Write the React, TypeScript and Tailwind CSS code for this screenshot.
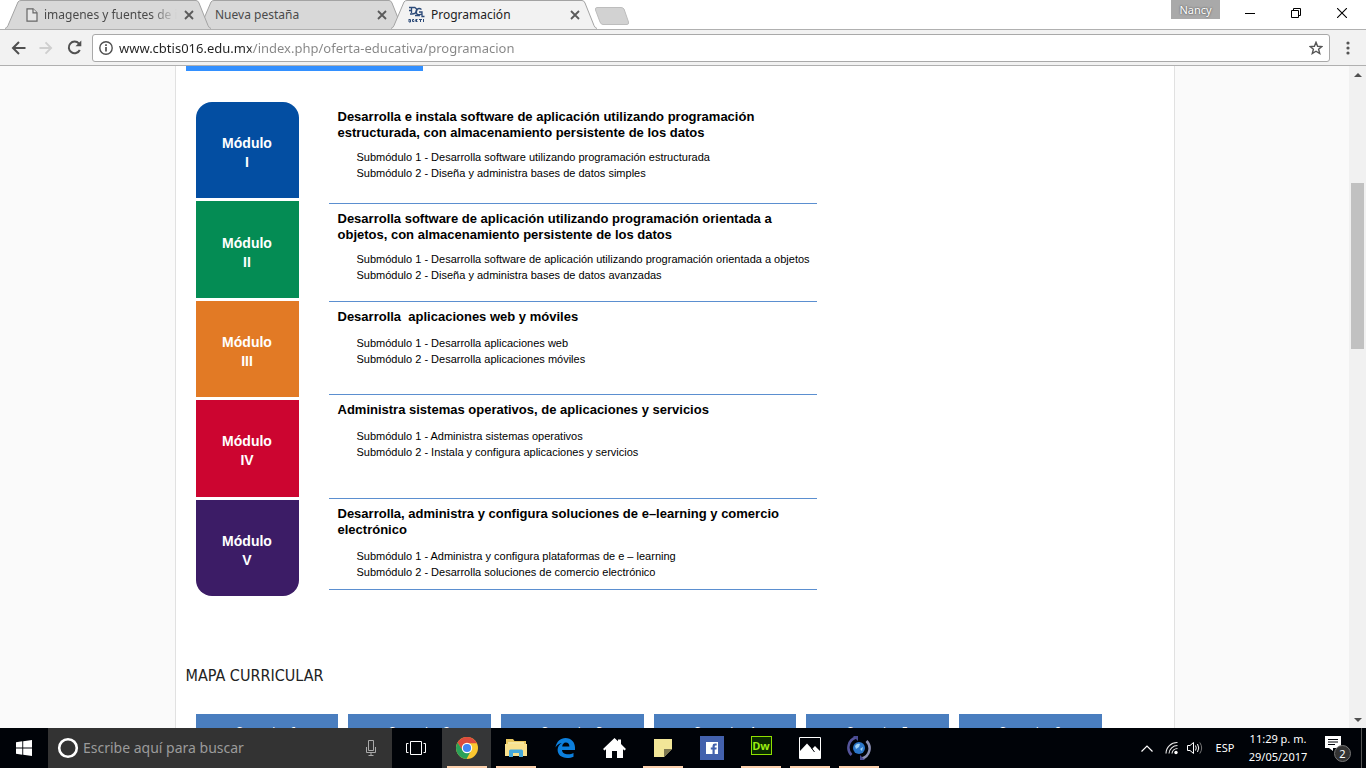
import type { ReactNode } from "react";

type Module = {
  numeral: string;
  color: string;
  row: string;
  title: string;
  subs: string[];
};

const modules: Module[] = [
  {
    numeral: "I",
    color: "bg-[#034ea2]",
    row: "min-h-[102px] gap-2",
    title:
      "Desarrolla e instala software de aplicación utilizando programación estructurada, con almacenamiento persistente de los datos",
    subs: [
      "Submódulo 1 - Desarrolla software utilizando programación estructurada",
      "Submódulo 2 - Diseña y administra bases de datos simples",
    ],
  },
  {
    numeral: "II",
    color: "bg-[#048c54]",
    row: "min-h-[98px] gap-2",
    title:
      "Desarrolla software de aplicación utilizando programación orientada a objetos, con almacenamiento persistente de los datos",
    subs: [
      "Submódulo 1 - Desarrolla software de aplicación utilizando programación orientada a objetos",
      "Submódulo 2 - Diseña y administra bases de datos avanzadas",
    ],
  },
  {
    numeral: "III",
    color: "bg-[#e27a25]",
    row: "min-h-[93px] gap-2.5",
    title: "Desarrolla  aplicaciones web y móviles",
    subs: ["Submódulo 1 - Desarrolla aplicaciones web", "Submódulo 2 - Desarrolla aplicaciones móviles"],
  },
  {
    numeral: "IV",
    color: "bg-[#cc0530]",
    row: "min-h-[104px] gap-2.5",
    title: "Administra sistemas operativos, de aplicaciones y servicios",
    subs: ["Submódulo 1 - Administra sistemas operativos", "Submódulo 2 - Instala y configura aplicaciones y servicios"],
  },
  {
    numeral: "V",
    color: "bg-[#3c1c66]",
    row: "min-h-[91px] gap-2.5",
    title: "Desarrolla, administra y configura soluciones de e–learning y comercio electrónico",
    subs: [
      "Submódulo 1 - Administra y configura plataformas de e – learning",
      "Submódulo 2 - Desarrolla soluciones de comercio electrónico",
    ],
  },
];

function TabShape({ fill }: { fill: string }) {
  return (
    <svg className="absolute inset-0 -z-10 h-full w-full" viewBox="0 0 206 29" preserveAspectRatio="none" aria-hidden="true">
      <path d="M0 28.5 Q2 28 3 25.500 L13 2 Q14 .5 16 .5 H191 Q193 .5 194 3 L203 25.500 Q204 28 206 28.500 V29 H0Z" fill={fill} />
      <path d="M0 28.500 Q2 28 3 25.500 L13 2 Q14 .5 16 .5 H191 Q193 .5 194 3 L203 25.500 Q204 28 206 28.500" fill="none" stroke="#a3a3a3" />
    </svg>
  );
}

function Tab({ title, icon, active, layer, faded }: { title: string; icon?: ReactNode; active?: boolean; layer: string; faded?: boolean }) {
  return (
    <div className={`relative isolate -ml-[13px] flex h-[29px] w-[206px] shrink-0 items-center gap-1.5 pr-[16px] pl-[17px] ${layer}`}>
      <TabShape fill={active ? "#f2f2f2" : "#d8d8d8"} />
      {icon}
      <button
        type="button"
        className={`min-w-0 flex-1 overflow-hidden text-left text-[12px] leading-4 whitespace-nowrap ${active ? "text-[#222]" : "text-[#4a4a4a]"} ${faded ? "[mask-image:linear-gradient(90deg,#000_80%,transparent_100%)]" : ""}`}
      >
        {title}
      </button>
      <button type="button" aria-label="Cerrar pestaña" className="flex size-3 shrink-0 items-center justify-center">
        <svg width="10" height="10" viewBox="0 0 10 10" stroke="#5a5a5a" strokeWidth="1.8">
          <path d="M1 1 9 9M9 1 1 9" />
        </svg>
      </button>
    </div>
  );
}

function FileIcon() {
  return (
    <svg className="ml-1 shrink-0" width="12" height="14" viewBox="0 0 12 14" fill="#e6e6e6" stroke="#666" strokeWidth="1.2">
      <path d="M1 .8H7L11 4.800V13.200H1Z" />
      <path d="M7 .8V4.800H11" />
    </svg>
  );
}

function DgetiIcon() {
  return (
    <svg className="shrink-0" width="17" height="17" viewBox="0 0 17 17" fill="none" stroke="#2c4a78">
      <path d="M1 1.500H7Q9.500 3 8.500 5.500T4 8H2M3.500 2V7M1 4.500H3" strokeWidth="1.300" />
      <path d="M13.500 3.500Q11 1.500 9 3.500T9 8Q11 9.500 13.500 8M11 6H14V10.500H16.500M7 9.500H12" strokeWidth="1.300" />
      <path d="M1 13V16H2.500V13.500H1M6 13.500H4.500V15.500H6V14.500M9.500 13.500H7.800V15.500H9.500M7.800 14.500H9M11 13.500H14M12.500 13.500V16M15.500 13V16" strokeWidth="1" />
    </svg>
  );
}

function Chrome() {
  return (
    <header className="shrink-0 font-['Noto_Sans',sans-serif]">
      <div className="flex h-[29px] items-start justify-between bg-white">
        <nav aria-label="Pestañas" className="flex h-[29px] items-start pl-[18px]">
          <Tab title="imagenes y fuentes de in" icon={<FileIcon />} layer="z-20" faded />
          <Tab title="Nueva pestaña" layer="z-10" />
          <Tab title="Programación" icon={<DgetiIcon />} active layer="z-30" />
          <button type="button" aria-label="Nueva pestaña" className="mt-[7px] -ml-[3px]">
            <svg width="36" height="18" viewBox="0 0 36 18">
              <path d="M3 .5H27Q29 .5 30 2L34.500 15Q35 17.500 33 17.500H9Q7 17.500 6 15L1.500 3Q1 .5 3 .5Z" fill="#d2d2d2" stroke="#bdbdbd" />
            </svg>
          </button>
        </nav>
        <div className="flex items-start">
          <button type="button" className="h-[19px] w-[49px] bg-[#a9a9a9] text-[11px] leading-[18px] text-white [text-shadow:0_0_2px_#333]">
            Nancy
          </button>
          <div className="flex h-[26px] pl-[7px]">
            <button type="button" aria-label="Minimizar" className="flex w-[46px] items-center justify-center">
              <svg width="10" height="10" viewBox="0 0 10 10" stroke="#000"><path d="M0 5.500H10" /></svg>
            </button>
            <button type="button" aria-label="Restaurar" className="flex w-[45px] items-center justify-center">
              <svg width="10" height="10" viewBox="0 0 10 10" stroke="#000" fill="none"><path d="M.5 2.500H7.500V9.500H.5ZM2.500 2.500V.5H9.500V7.500H7.500" /></svg>
            </button>
            <button type="button" aria-label="Cerrar" className="flex w-[48px] items-center justify-center">
              <svg width="10" height="10" viewBox="0 0 10 10" stroke="#000" strokeWidth="1.100"><path d="M0 0 10 10M10 0 0 10" /></svg>
            </button>
          </div>
        </div>
      </div>
      <div className="flex h-[37px] items-center border-y border-[#b0b0b0] bg-[#f2f2f2] pl-[10px]">
        <button type="button" aria-label="Atrás" className="flex w-4 justify-center">
          <svg width="15" height="14" viewBox="0 0 15 14" fill="none" stroke="#505050" strokeWidth="2"><path d="M14.500 7H2M8 1 2 7 8 13" /></svg>
        </button>
        <button type="button" aria-label="Adelante" className="ml-3 flex w-4 justify-center">
          <svg width="14" height="14" viewBox="0 0 15 14" fill="none" stroke="#cfcfcf" strokeWidth="2"><path d="M.5 7H13M7 1 13 7 7 13" /></svg>
        </button>
        <button type="button" aria-label="Volver a cargar" className="ml-3 flex w-4 justify-center">
          <svg width="15" height="15" viewBox="0 0 15 15" fill="none" stroke="#505050" strokeWidth="2"><path d="M12.800 10A5.800 5.800 0 1 1 12 3.600" /><path d="M14.300 .5V6.300H8.500Z" fill="#505050" stroke="none" /></svg>
        </button>
        <label className="ml-[10px] flex h-7 min-w-0 flex-1 items-center rounded-[3px] border border-[#a9a9a9] bg-white pr-1.5 pl-1.5">
          <svg className="shrink-0" width="14" height="14" viewBox="0 0 14 14" fill="none" stroke="#4f4f4f" strokeWidth="1.400"><circle cx="7" cy="7" r="6.200" /><path d="M7 6V10.500M7 3.300V4.900" strokeWidth="1.700" /></svg>
          <input
            type="text"
            aria-label="Dirección"
            defaultValue="www.cbtis016.edu.mx/index.php/oferta-educativa/programacion"
            className="ml-1.5 min-w-0 flex-1 bg-[linear-gradient(90deg,#222_132px,#858585_132px)] bg-clip-text text-[13px] leading-5 text-transparent outline-none"
          />
          <button type="button" aria-label="Marcador" className="shrink-0">
            <svg width="14" height="14" viewBox="0 0 14 14" fill="none" stroke="#555" strokeWidth="1.400"><path d="M7 1.300 8.600 5.300 12.900 5.600 9.600 8.300 10.700 12.500 7 10.200 3.300 12.500 4.400 8.300 1.100 5.600 5.400 5.300Z" /></svg>
          </button>
        </label>
        <button type="button" aria-label="Menú" className="flex w-[36px] justify-center">
          <svg width="4" height="14" viewBox="0 0 4 14" fill="#555"><circle cx="2" cy="2" r="1.600" /><circle cx="2" cy="7" r="1.600" /><circle cx="2" cy="12" r="1.600" /></svg>
        </button>
      </div>
    </header>
  );
}

function Scrollbar() {
  return (
    <div className="flex w-[17px] shrink-0 flex-col items-center bg-[#f1f1f1]">
      <button type="button" aria-label="Subir" className="flex h-[17px] w-full items-center justify-center">
        <svg width="8" height="4" viewBox="0 0 8 4" fill="#505050"><path d="M4 0 8 4H0Z" /></svg>
      </button>
      <div className="flex w-full flex-1 flex-col items-center">
        <div className="flex-[100]" />
        <div className="w-[13px] flex-[166] bg-[#c1c1c1]" />
        <div className="flex-[362]" />
      </div>
      <button type="button" aria-label="Bajar" className="flex h-[17px] w-full items-center justify-center">
        <svg width="8" height="4" viewBox="0 0 8 4" fill="#505050"><path d="M0 0H8L4 4Z" /></svg>
      </button>
    </div>
  );
}

function Page() {
  return (
    <main className="min-w-0 flex-1 overflow-hidden bg-[#fafafa]">
      <article className="mx-auto w-full max-w-[1000px] border-x border-[#e1e1e1] bg-white pr-[72px] pl-[10px]">
        <div className="flex h-[5px] items-end overflow-hidden font-['DejaVu_Sans_Condensed','DejaVu_Sans',sans-serif] text-[16px]">
          <h2 className="shrink-0 bg-[#3390ff] leading-5 text-white">COMPETENCIAS PROFESIONALES</h2>
        </div>
        <section className="mt-[31px] ml-[10px] flex gap-[30px] font-['Liberation_Sans',Arial,sans-serif]">
          <div className="flex h-[494px] w-[103px] shrink-0 flex-col gap-[3px] overflow-hidden rounded-[16px]">
            {modules.map((m) => (
              <div
                key={m.numeral}
                className={`flex flex-1 flex-col items-center justify-center pt-1.5 font-['Liberation_Sans_Narrow','Liberation_Sans',sans-serif] text-[14px] leading-[19px] font-bold text-white ${m.color}`}
              >
                <span>Módulo</span>
                <span>{m.numeral}</span>
              </div>
            ))}
          </div>
          <div className="w-[488px]">
            {modules.map((m) => (
              <div key={m.numeral} className={`flex flex-col border-b border-[#5b8fd0] pt-[7px] pl-[9px] text-black ${m.row}`}>
                <h3 className="font-['Liberation_Sans_Narrow','Liberation_Sans',sans-serif] text-[13px] leading-4 font-bold whitespace-pre-wrap">{m.title}</h3>
                <ul className="pl-[19px] text-[11px] leading-4 whitespace-nowrap">
                  {m.subs.map((s) => (
                    <li key={s}>{s}</li>
                  ))}
                </ul>
              </div>
            ))}
          </div>
        </section>
        <h2 className="mt-[70px] font-['DejaVu_Sans_Condensed','DejaVu_Sans',sans-serif] text-[16px] leading-5 text-[#222]">MAPA CURRICULAR</h2>
        <div className="mt-7 ml-[10px] grid grid-cols-6 gap-[10px] font-['DejaVu_Sans_Condensed',sans-serif] text-[12px] text-white">
          {[1, 2, 3, 4, 5, 6].map((n) => (
            <button key={n} type="button" className="h-[36px] bg-[#4a7ebf] text-center">
              Semestre {n}
            </button>
          ))}
        </div>
      </article>
    </main>
  );
}

function AppButton({ label, open, active, children }: { label: string; open?: boolean; active?: boolean; children: ReactNode }) {
  return (
    <button
      type="button"
      aria-label={label}
      className={`flex h-full w-[49px] flex-col items-center pr-1 pl-[5px] ${active ? "bg-[#353637] pr-0 pl-0" : ""}`}
    >
      <span className="flex w-full flex-1 items-center justify-center pt-0.5">{children}</span>
      <span className={`h-0.5 w-full ${open || active ? "bg-[#fcd0ac]" : ""}`} />
    </button>
  );
}

function Taskbar() {
  return (
    <footer className="flex h-10 shrink-0 items-stretch bg-[#000308] font-['Noto_Sans',sans-serif] text-white">
      <button type="button" aria-label="Inicio" className="flex w-12 items-center justify-center">
        <svg width="16" height="16" viewBox="0 0 16 16" fill="#fff"><path d="M0 2.200 6.300 1.300V7.500H0ZM7.200 1.200 16 0V7.500H7.200ZM0 8.400H6.300V14.700L0 13.800ZM7.200 8.400H16V16L7.200 14.800Z" /></svg>
      </button>
      <label className="flex w-[344px] items-center bg-[#333] pr-3 pl-[9px]">
        <svg className="shrink-0" width="22" height="22" viewBox="0 0 22 22" fill="none"><circle cx="11" cy="11" r="8.800" stroke="#fff" strokeWidth="2.600" /></svg>
        <input type="text" aria-label="Buscar" placeholder="Escribe aquí para buscar" className="ml-1 min-w-0 flex-1 text-[14px] leading-5 outline-none placeholder:text-[#9b9b9b]" />
        <svg className="shrink-0" width="18" height="18" viewBox="0 0 18 18" fill="none" stroke="#aaa"><path d="M6.500 1.500H11.500V11.500H6.500ZM4.500 8V13.500H13.500V8M9 13.500V16.500M6.500 16.500H11.500" /></svg>
      </label>
      <button type="button" aria-label="Vista de tareas" className="mr-[2px] flex w-12 items-center justify-center">
        <svg width="20" height="14" viewBox="0 0 20 14" fill="none" stroke="#fff"><path d="M4.500 .5H15.500V13.500H4.500ZM2.500 2.500H.5V11.500H2.500M17.500 2.500H19.500V11.500H17.500" /></svg>
      </button>
      <AppButton label="Google Chrome" active>
        <svg width="22" height="22" viewBox="0 0 22 22">
          <circle cx="11" cy="11" r="11" fill="#fbc730" />
          <path d="M1.500 5.500A11 11 0 0 1 20.500 5.500L21 6.200H11A5 5 0 0 0 6.300 9.500L6 13Z" fill="#dd4b3e" />
          <path d="M1.500 5.500A11 11 0 0 0 10.500 22L15 13.800A5 5 0 0 1 6.700 13.500Z" fill="#2aa159" />
          <circle cx="11" cy="11" r="5.200" fill="#fff" />
          <circle cx="11" cy="11" r="4.100" fill="#4285f4" />
        </svg>
      </AppButton>
      <AppButton label="Explorador de archivos" open>
        <svg width="22" height="20" viewBox="0 0 22 20">
          <path d="M1 1H8L9.500 3H21V18H1Z" fill="#e9c75e" />
          <path d="M3 4H19V8H3Z" fill="#f5e6a0" />
          <path d="M0 6H22V18H0Z" fill="#f9e18d" />
          <path d="M4 19V13Q4 11.500 5.500 11.500H16.500Q18 11.500 18 13V19H14V15H8V19Z" fill="#45a9db" />
        </svg>
      </AppButton>
      <AppButton label="Microsoft Edge">
        <svg width="20" height="20" viewBox="0 0 20 20" fill="#0c7fdc">
          <path d="M.5 9.500C1.500 3.500 5.500 0 10.500 0C16.500 0 20 4.500 20 9.500V12H7C7.200 15 10 16.300 13 16.300C15.300 16.300 17.200 15.600 18.500 14.900V18.800C16.800 19.600 14.600 20 12.200 20C6.200 20 2.600 16.600 2.600 11.800C2.600 8.800 4.300 6.400 6.800 5C4.200 5.400 1.900 7 .5 9.500ZM7.200 8.500H14.400C14.400 6 13 4.600 10.900 4.600C8.700 4.600 7.500 6.300 7.200 8.500Z" fillRule="evenodd" />
        </svg>
      </AppButton>
      <AppButton label="Casa">
        <svg width="23" height="20" viewBox="0 0 23 20" fill="#fff"><path d="M11.500 0 15 3.300V1.500H18V6L23 11L21.500 12.500 20 11.300V20H14V13H9V20H3V11.300L1.500 12.500 0 11Z" /></svg>
      </AppButton>
      <AppButton label="Notas" open>
        <svg width="18" height="18" viewBox="0 0 18 18"><path d="M0 0H18V10L10 18H0Z" fill="#f2e698" /><path d="M10 18V10H18Z" fill="#7d7750" /></svg>
      </AppButton>
      <AppButton label="Facebook">
        <svg width="24" height="24" viewBox="0 0 24 24">
          <path d="M0 0H24V24H0Z" fill="#4361ad" />
          <path d="M6 6H18V18H6Z" fill="#fff" />
          <path d="M12.500 18V13.500H10.800V11.500H12.500V10Q12.500 7.600 15 7.600H16.700V9.600H15.500Q14.700 9.600 14.700 10.500V11.500H16.700L16.400 13.500H14.700V18Z" fill="#4361ad" />
        </svg>
      </AppButton>
      <AppButton label="Dreamweaver" open>
        <span className="mb-1.5 flex h-[19px] w-[21px] items-center justify-center border border-[#8fe000] bg-[#0a2a00] font-['Open_Sans',sans-serif] text-[11px] leading-none font-bold text-[#9bef10]">
          Dw
        </span>
      </AppButton>
      <AppButton label="Fotos" open>
        <svg width="22" height="22" viewBox="0 0 22 22"><path d="M.5 .5H21.500V21.500H.5Z" fill="#000308" stroke="#fff" /><path d="M1 14 8 6.500 13 12 16 9 21 14V21H1Z" fill="#fff" /><path d="M12.500 11 15.500 15" stroke="#000308" /></svg>
      </AppButton>
      <AppButton label="Sincronización" open>
        <svg width="24" height="24" viewBox="0 0 24 24" fill="none">
          <path d="M9 1.500A10.500 10.500 0 0 0 4.500 19" stroke="#55559c" strokeWidth="2.500" />
          <path d="M15 22.500A10.500 10.500 0 0 0 19.500 5" stroke="#8b90b4" strokeWidth="2.500" />
          <path d="M6 0H11V5ZM18 24H13V19Z" fill="#494b92" />
          <circle cx="12" cy="12" r="6" fill="#2c77c9" />
          <path d="M8 10Q10 7 13 8L12 11 9 13ZM13 13 16 11 15 15Z" fill="#9fd2f5" />
        </svg>
      </AppButton>
      <div className="ml-auto flex items-center">
        <button type="button" aria-label="Iconos ocultos" className="flex w-3">
          <svg width="12" height="7" viewBox="0 0 12 7" fill="none" stroke="#fff" strokeWidth="1.200"><path d="M.5 6.500 6 1 11.500 6.500" /></svg>
        </button>
        <button type="button" aria-label="Red" className="ml-3 flex w-4">
          <svg width="14" height="14" viewBox="0 0 14 14" fill="none" stroke="#e8e8e8" strokeWidth="1.100">
            <path d="M1 12.500A11 11 0 0 1 12.500 1.500M4 12.500A8.500 8.500 0 0 1 12.500 4.500M7 12.500A5.500 5.500 0 0 1 12.500 7.500" />
            <circle cx="11" cy="11.500" r="1.700" fill="#fff" stroke="none" />
          </svg>
        </button>
        <button type="button" aria-label="Volumen" className="ml-1.5 flex w-4">
          <svg width="16" height="14" viewBox="0 0 16 14" fill="none" stroke="#fff"><path d="M.5 4.500H3L6.500 1.500V12.500L3 9.500H.5ZM8.500 4.500Q10 7 8.500 9.500M10.500 3Q13 7 10.500 11" /><path d="M12.800 1.500Q16.500 7 12.800 12.500" stroke="#777" /></svg>
        </button>
        <button type="button" className="ml-3 w-5 text-[11px] leading-4">ESP</button>
        <button type="button" className="ml-3 w-[62px] text-center text-[11px] leading-[18px] whitespace-nowrap">
          11:29 p. m.
          <br />
          29/05/2017
        </button>
        <button type="button" aria-label="2 notificaciones" className="relative ml-[16px] flex size-6 items-start">
          <svg width="16" height="16" viewBox="0 0 16 16"><path d="M0 0H16V12H8V15L4 12H0Z" fill="#fff" /><path d="M3 3.500H13M3 6H13M3 8.500H10" stroke="#000308" /></svg>
          <span className="absolute -right-0.5 -bottom-0.5 flex size-[17px] items-center justify-center rounded-full border border-[#777] bg-[#333] text-[11px] leading-none">2</span>
        </button>
        <span className="ml-3 h-10 w-[5px] border-l border-[#555]" />
      </div>
    </footer>
  );
}

export default function App() {
  return (
    <div className="flex h-screen flex-col overflow-hidden bg-white">
      <Chrome />
      <div className="flex min-h-0 flex-1">
        <Page />
        <Scrollbar />
      </div>
      <Taskbar />
    </div>
  );
}
